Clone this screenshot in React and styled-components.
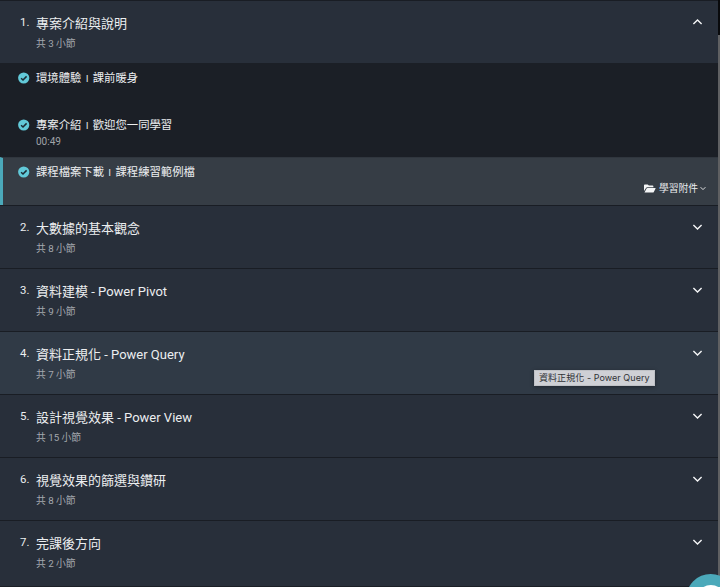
import React from "react";
import styled, { createGlobalStyle } from "styled-components";

const GlobalStyle = createGlobalStyle`
  * { box-sizing: border-box; }
  html, body { margin: 0; height: 587px; overflow: hidden; background: #1b1f26; }
  body { font-family: Roboto, "Noto Sans CJK TC", sans-serif; color: #eceef0; }
`;

const Page = styled.div`
  display: flex;
  width: 720px;
  height: 587px;
  overflow: hidden;
`;

const Outline = styled.main`
  width: 718px;
  flex: none;
`;

const ScrollTrack = styled.div`
  width: 2px;
  height: 587px;
  padding-top: 35px;
  background: #090a0c;
`;

const ScrollThumb = styled.div`
  height: 552px;
  background: #5f6062;
`;

const SectionHeader = styled.header`
  display: flex;
  height: ${(p) => (p.$last ? 66 : 63)}px;
  padding: 13px 15px 0 20px;
  border-top: 1px solid #191d24;
  background: ${(p) => (p.$hovered ? "#303a46" : "#282f3a")};
`;

const SectionNumber = styled.span`
  width: 16px;
  flex: none;
  font-size: 11.4px;
  line-height: 16px;
`;

const SectionBody = styled.div`
  flex: 1;
  padding-top: 1px;
`;

const SectionTitle = styled.h2`
  margin: 0;
  font-size: 13px;
  font-weight: 400;
  line-height: 18px;
  white-space: nowrap;
`;

const SectionMeta = styled.div`
  margin-top: 4px;
  font-size: 9.75px;
  line-height: 14px;
  color: #a4a8ae;
`;

const SectionChevron = styled.svg`
  width: 11px;
  height: 8px;
  margin-top: 4px;
  fill: none;
  stroke: #f4f5f6;
  stroke-width: 1.4;
`;

const Lesson = styled.div`
  display: flex;
  height: ${(p) => (p.$active ? 48 : 47)}px;
  padding: ${(p) => (p.$active ? 5 : 6)}px 12px 0 ${(p) => (p.$active ? 15 : 18)}px;
  border-left: ${(p) => (p.$active ? "3px solid #4ba9ba" : "0")};
  border-top: ${(p) => (p.$active ? "1px solid #30363e" : "0")};
  background: ${(p) => (p.$active ? "#363d45" : "#1b1f26")};
`;

const CheckIcon = styled.svg`
  width: 12px;
  height: 12px;
  margin: 3px 6px 0 0;
  flex: none;
`;

const LessonBody = styled.div`
  flex: 1;
`;

const LessonTitle = styled.div`
  display: flex;
  font-size: 11.35px;
  line-height: 18px;
`;

const Separator = styled.span`
  width: 11.4px;
  height: 18px;
  font-size: 9.5px;
  line-height: 19px;
  text-align: center;
`;

const LessonTime = styled.div`
  margin-top: 1px;
  font-size: 10px;
  line-height: 14px;
  color: #a0a3a8;
`;

const Attachment = styled.div`
  display: flex;
  align-items: center;
  align-self: flex-start;
  margin-top: 19px;
  font-size: 9.75px;
  line-height: 14px;
`;

const FolderIcon = styled.svg`
  width: 12px;
  height: 9px;
  margin: 0 3px 1px 0;
  fill: #f4f5f6;
`;

const SmallChevron = styled.svg`
  width: 6px;
  height: 5px;
  margin: 0 0 1px 2px;
  fill: none;
  stroke: #dfe1e3;
`;

const Tooltip = styled.div`
  position: absolute;
  left: 534px;
  top: 370px;
  width: 121px;
  height: 16px;
  padding-left: 4px;
  background: #cfd0d5;
  border: 1px solid #bfc1c6;
  box-shadow: 0 1px 4px rgba(0, 0, 0, 0.35);
  color: #303136;
  font: 9px/14px Inter, "Noto Sans CJK TC", sans-serif;
  letter-spacing: 0.06px;
  white-space: nowrap;
`;

const ChatButton = styled.svg`
  position: fixed;
  left: 686px;
  top: 574px;
  width: 34px;
  height: 13px;
`;

const lessons = [
  { title: ["環境體驗", "課前暖身"] },
  { title: ["專案介紹", "歡迎您一同學習"], time: "00:49" },
  { title: ["課程檔案下載", "課程練習範例檔"], active: true },
];

const sections = [
  { title: "專案介紹與說明", count: 3, lessons },
  { title: "大數據的基本觀念", count: 8 },
  { title: "資料建模 - Power Pivot", count: 9 },
  { title: "資料正規化 - Power Query", count: 7, hovered: true },
  { title: "設計視覺效果 - Power View", count: 15 },
  { title: "視覺效果的篩選與鑽研", count: 8 },
  { title: "完課後方向", count: 2 },
];

function LessonRow({ lesson }) {
  return (
    <Lesson $active={lesson.active}>
      <CheckIcon viewBox="0 0 12 12">
        <circle cx="5.7" cy="6" r="5.6" fill="#62c9d8" />
        <path d="M3.1 6.2 5 8 8.6 4.4" fill="none" stroke="#1b2a33" strokeWidth="1.5" />
      </CheckIcon>
      <LessonBody>
        <LessonTitle>
          {lesson.title[0]}
          <Separator>l</Separator>
          {lesson.title[1]}
        </LessonTitle>
        {lesson.time && <LessonTime>{lesson.time}</LessonTime>}
      </LessonBody>
      {lesson.active && (
        <Attachment>
          <FolderIcon viewBox="0 0 12 9">
            <path d="M0 7V1.2Q0 .4.8.4H3.7L4.9 1.6H8.6Q9.4 1.6 9.4 2.4V3.2H3.2Q2.4 3.2 2 3.9Z" />
            <path d="M.5 8.6 2.6 4.6Q2.9 4 3.5 4H11.2Q11.9 4 11.6 4.6L9.8 8Q9.5 8.6 8.9 8.6Z" />
          </FolderIcon>
          學習附件
          <SmallChevron viewBox="0 0 6 5">
            <path d="M.6 1.2 3 3.6 5.4 1.2" />
          </SmallChevron>
        </Attachment>
      )}
    </Lesson>
  );
}

export default function App() {
  return (
    <>
      <GlobalStyle />
      <Page>
        <Outline>
          {sections.map((section, index) => (
            <section key={section.title}>
              <SectionHeader $hovered={section.hovered} $last={index === sections.length - 1}>
                <SectionNumber>{index + 1}.</SectionNumber>
                <SectionBody>
                  <SectionTitle>{section.title}</SectionTitle>
                  <SectionMeta>共 {section.count} 小節</SectionMeta>
                </SectionBody>
                <SectionChevron viewBox="0 0 11 8">
                  <path d={section.lessons ? "M1.4 6 5.5 1.9 9.6 6" : "M1.4 2 5.5 6.1 9.6 2"} />
                </SectionChevron>
              </SectionHeader>
              {section.lessons?.map((lesson) => (
                <LessonRow key={lesson.title[0]} lesson={lesson} />
              ))}
            </section>
          ))}
        </Outline>
        <ScrollTrack>
          <ScrollThumb />
        </ScrollTrack>
      </Page>
      <Tooltip>資料正規化 - Power Query</Tooltip>
      <ChatButton viewBox="0 0 34 13">
        <circle cx="24.7" cy="24.6" r="24.6" fill="#4ba9ba" />
        <ellipse cx="24.9" cy="20.5" rx="12" ry="9.5" fill="#fff" />
      </ChatButton>
    </>
  );
}
